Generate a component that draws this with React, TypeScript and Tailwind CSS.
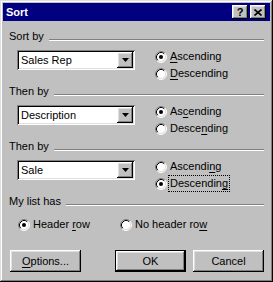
import React from 'react';

const raised =
  'shadow-[inset_-1px_-1px_#000,inset_1px_1px_#fff,inset_-2px_-2px_#808080,inset_2px_2px_#dfdfdf]';
const sunken =
  'shadow-[inset_1px_1px_#808080,inset_-1px_-1px_#fff,inset_2px_2px_#000,inset_-2px_-2px_#dfdfdf]';

function M({ text, u }: { text: string; u: number }) {
  return (
    <>
      {text.slice(0, u)}
      <span className="underline underline-offset-[2px]">{text[u]}</span>
      {text.slice(u + 1)}
    </>
  );
}

function RadioIcon({ checked }: { checked?: boolean }) {
  return (
    <svg width="12" height="12" viewBox="0 0 12 12" className="shrink-0">
      <circle cx="6" cy="6" r="5" fill="#fff" />
      <path d="M2.11 9.89 A5.5 5.5 0 0 1 9.89 2.11" fill="none" stroke="#808080" />
      <path d="M9.89 2.11 A5.5 5.5 0 0 1 2.11 9.89" fill="none" stroke="#fff" />
      <path d="M2.82 9.18 A4.5 4.5 0 0 1 9.18 2.82" fill="none" stroke="#000" />
      <path d="M9.18 2.82 A4.5 4.5 0 0 1 2.82 9.18" fill="none" stroke="#dfdfdf" />
      {checked && <circle cx="6" cy="6" r="2" fill="#000" />}
    </svg>
  );
}

function Radio({
  checked,
  focus,
  children,
}: {
  checked?: boolean;
  focus?: boolean;
  children: React.ReactNode;
}) {
  return (
    <div className="flex items-center h-[13px] gap-[3px]">
      <RadioIcon checked={checked} />
      <span className={focus ? 'outline-1 outline-dotted outline-black outline-offset-[1px]' : ''}>
        {children}
      </span>
    </div>
  );
}

function GroupHeader({ label }: { label: string }) {
  return (
    <div className="flex items-start h-[13px] mt-[5px]">
      <span>{label}</span>
      <div className="flex-1 ml-[5px] mt-[9px] h-[2px] border-t border-t-[#808080] border-b border-b-white" />
    </div>
  );
}

function Combo({ value }: { value: string }) {
  return (
    <div className={`w-[118px] h-[20px] bg-white flex p-[2px] ${sunken}`}>
      <span className="flex-1 pl-[2px] leading-[16px]">{value}</span>
      <div className={`w-[16px] h-[16px] bg-[#c0c0c0] flex items-center justify-center ${raised}`}>
        <svg width="7" height="4" viewBox="0 0 7 4">
          <path d="M0 0h7L3.5 4z" fill="#000" />
        </svg>
      </div>
    </div>
  );
}

function SortGroup({
  label,
  value,
  asc,
  desc,
  desc3,
  ascending,
  focus,
}: {
  label: string;
  value: string;
  asc: number;
  desc: number;
  desc3?: boolean;
  ascending: boolean;
  focus?: boolean;
}) {
  return (
    <>
      <GroupHeader label={label} />
      <div className="flex mt-[7px] pl-[8px]">
        <Combo value={value} />
        <div className="ml-[20px] flex flex-col gap-[4px]">
          <Radio checked={ascending}>
            <M text="Ascending" u={asc} />
          </Radio>
          <Radio checked={!ascending} focus={focus || desc3}>
            <M text="Descending" u={desc} />
          </Radio>
        </div>
      </div>
    </>
  );
}

function Button({ children, def }: { children: React.ReactNode; def?: boolean }) {
  if (def) {
    return (
      <div className="w-[71px] h-[22px] border border-black">
        <div className={`w-full h-full flex items-center justify-center ${raised}`}>{children}</div>
      </div>
    );
  }
  return (
    <div className={`w-[71px] h-[22px] flex items-center justify-center ${raised}`}>{children}</div>
  );
}

export default function App() {
  return (
    <div
      className="w-[273px] h-[282px] bg-[#c0c0c0] p-[3px] font-['Liberation_Sans',Arial,sans-serif] text-[11px] leading-[13px] text-black shadow-[inset_-1px_-1px_#000,inset_1px_1px_#dfdfdf,inset_-2px_-2px_#808080,inset_2px_2px_#fff]"
    >
      <div className="h-[18px] bg-[#000080] flex items-center justify-between pl-[3px] pr-[4px]">
        <span className="text-white font-bold text-[11px]">Sort</span>
        <div className="flex gap-[2px]">
          <div className={`w-[16px] h-[14px] bg-[#c0c0c0] flex items-center justify-center font-bold text-[11px] ${raised}`}>
            ?
          </div>
          <div className={`w-[16px] h-[14px] bg-[#c0c0c0] flex items-center justify-center ${raised}`}>
            <svg width="8" height="7" viewBox="0 0 8 7">
              <path d="M0.5 0.5L7.5 6.5M7.5 0.5L0.5 6.5" stroke="#000" strokeWidth="1.6" />
            </svg>
          </div>
        </div>
      </div>

      <div className="px-[6px] pt-[4px]">
        <SortGroup label="Sort by" value="Sales Rep" asc={0} desc={0} ascending />
        <SortGroup label="Then by" value="Description" asc={2} desc={5} ascending />
        <SortGroup label="Then by" value="Sale" asc={7} desc={9} ascending={false} focus />

        <GroupHeader label="My list has" />
        <div className="flex mt-[10px] pl-[9px]">
          <div className="w-[102px]">
            <Radio checked>
              <M text="Header row" u={7} />
            </Radio>
          </div>
          <Radio>
            <M text="No header row" u={12} />
          </Radio>
        </div>

        <div className="flex mt-[19px] pl-[1px]">
          <Button>
            <M text="Options..." u={0} />
          </Button>
          <div className="ml-[34px]">
            <Button def>OK</Button>
          </div>
          <div className="ml-[7px]">
            <Button>Cancel</Button>
          </div>
        </div>
      </div>
    </div>
  );
}
